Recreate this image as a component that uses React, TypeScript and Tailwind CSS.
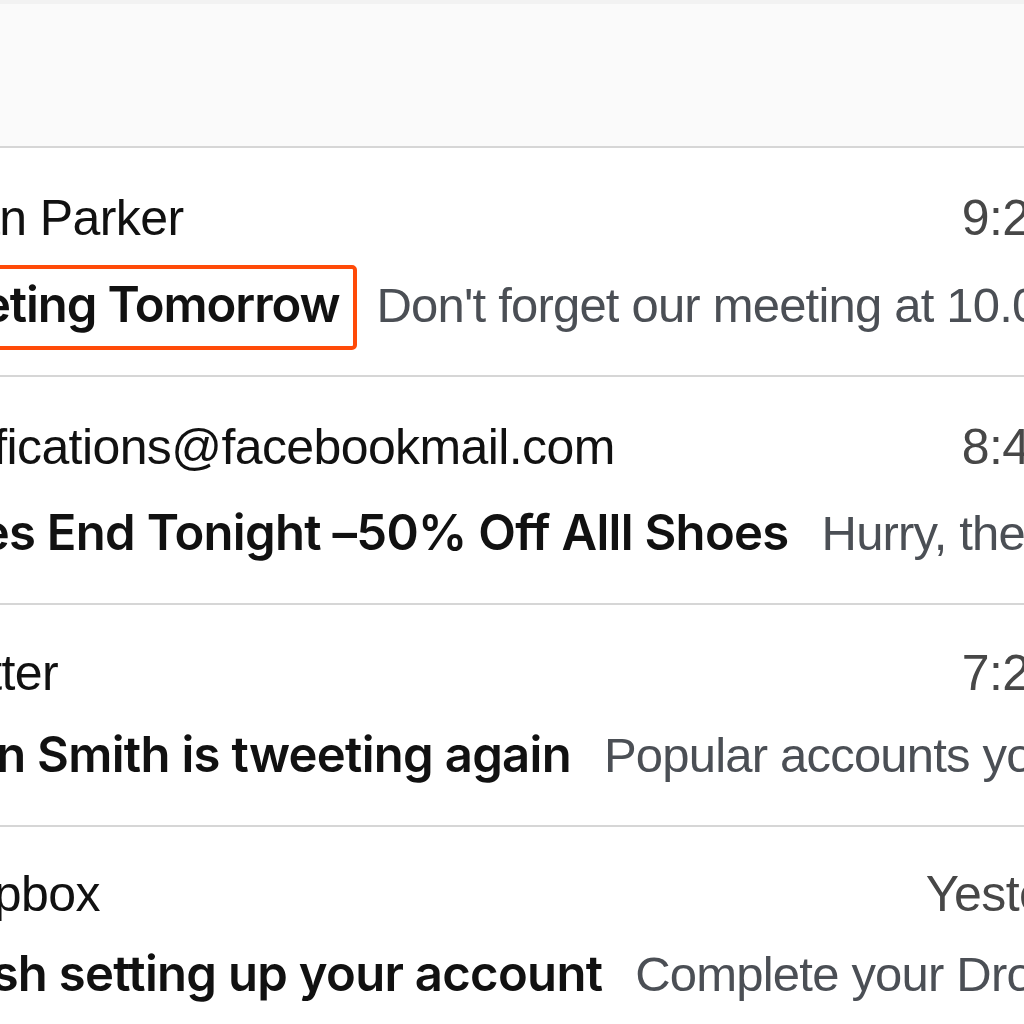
import React from "react";

type Mail = {
  sender: string;
  time: string;
  subject: string;
  preview: string;
  highlighted?: boolean;
  rowClass: string;
  gapClass: string;
};

const mails: Mail[] = [
  {
    sender: "Evan Parker",
    time: "9:21 AM",
    subject: "Meeting Tomorrow",
    preview: "Don't forget our meeting at 10.00 AM in the main office.",
    highlighted: true,
    rowClass: "h-[229px] pt-[40px]",
    gapClass: "mt-[16px]",
  },
  {
    sender: "notifications@facebookmail.com",
    time: "8:44 AM",
    subject: "Sales End Tonight –50% Off Alll Shoes",
    preview: "Hurry, these deals won't last long!",
    rowClass: "h-[228px] pt-[40px]",
    gapClass: "mt-[15px]",
  },
  {
    sender: "Twitter",
    time: "7:26 AM",
    subject: "John Smith is tweeting again",
    preview: "Popular accounts you follow have posted new tweets.",
    rowClass: "h-[222px] pt-[38px]",
    gapClass: "mt-[11px]",
  },
  {
    sender: "Dropbox",
    time: "Yesterday",
    subject: "Finish setting up your account",
    preview: "Complete your Dropbox setup to get started.",
    rowClass: "h-[222px] pt-[37px]",
    gapClass: "mt-[9px]",
  },
];

const plain = "font-['Liberation_Sans',Arial,sans-serif]";

function Row({ mail }: { mail: Mail }) {
  return (
    <div className={`${mail.rowClass} border-b-2 border-[#d6d6d6]`}>
      <div className="flex h-[60px] items-center justify-between whitespace-nowrap leading-[60px]">
        <span className={`${plain} text-[50px] tracking-[-0.6px] text-[#111111]`}>
          {mail.sender}
        </span>
        <span className={`${plain} text-[50px] tracking-[-0.6px] text-[#474747]`}>
          {mail.time}
        </span>
      </div>
      <div className={`${mail.gapClass} -ml-[5px] flex h-[85px] items-center whitespace-nowrap`}>
        <span
          className={
            mail.highlighted
              ? "relative pb-[4px] font-['Inter',sans-serif] text-[49px] font-semibold leading-[60px] tracking-[-1.1px] text-[#111111]"
              : "relative pb-[4px] font-['Inter',sans-serif] text-[49px] font-semibold leading-[60px] tracking-[-0.7px] text-[#111111]"
          }
        >
          {mail.subject}
          {mail.highlighted && (
            <span className="pointer-events-none absolute -top-[10px] -bottom-[11px] -left-[22px] -right-[18px] rounded-[5px] border-[4px] border-[#ff4a08]" />
          )}
        </span>
        <span
          className={
            mail.highlighted
              ? `ml-[37px] pb-[4px] ${plain} text-[49px] leading-[60px] tracking-[-0.8px] text-[#4b4f55]`
              : `ml-[33px] pb-[4px] ${plain} text-[49px] leading-[60px] tracking-[-0.8px] text-[#4b4f55]`
          }
        >
          {mail.preview}
        </span>
      </div>
    </div>
  );
}

export default function App() {
  return (
    <div className="h-[1024px] w-[1024px] overflow-hidden bg-white">
      <div className="h-[148px] border-b-2 border-[#d6d6d6] bg-[#fafafa]">
        <div className="h-[4px] bg-[#f2f2f2]" />
      </div>
      <div className="-ml-[85px] w-[1226px]">
        {mails.map((m) => (
          <Row key={m.sender} mail={m} />
        ))}
      </div>
    </div>
  );
}
